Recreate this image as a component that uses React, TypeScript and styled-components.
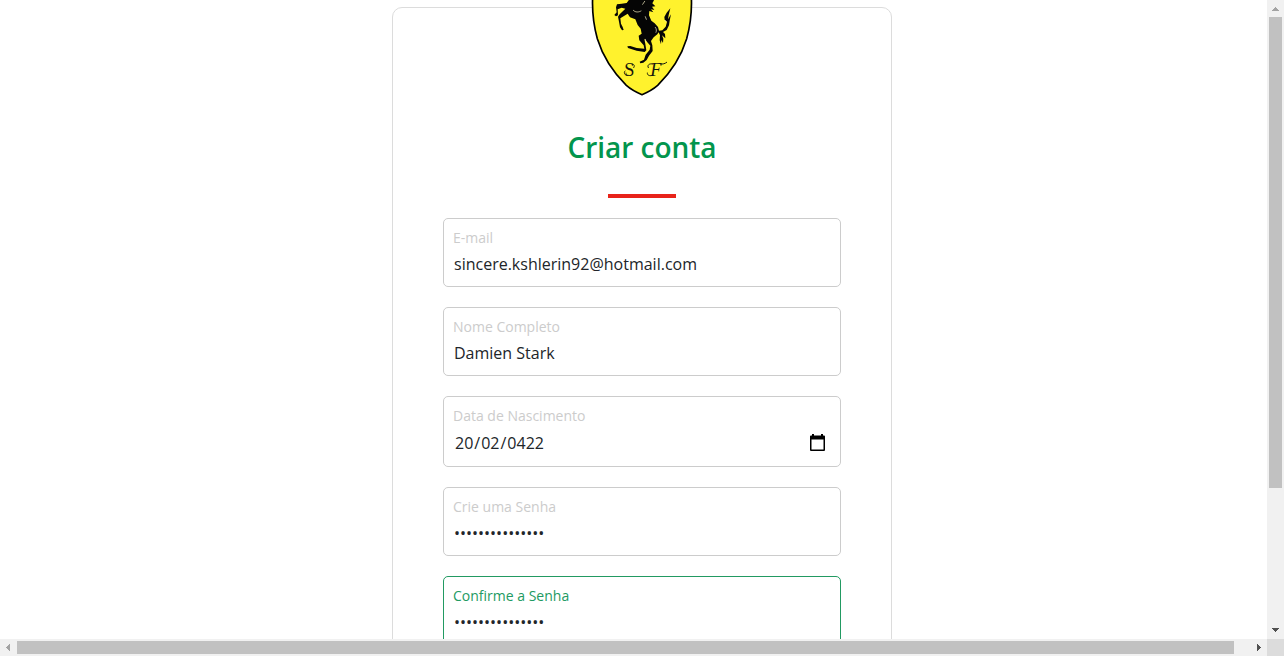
import React from "react";
import styled, { createGlobalStyle } from "styled-components";

const GlobalStyle = createGlobalStyle`
  * { box-sizing: border-box; }
  html, body { margin: 0; padding: 0; background: #fff; overflow: hidden; }
  body { font-family: "Open Sans", "Liberation Sans", sans-serif; }
`;

const Window = styled.div`
  display: grid;
  grid-template-columns: minmax(0, 1fr) 17px;
  grid-template-rows: minmax(0, 1fr) 17px;
  width: 100vw;
  height: 100vh;
  overflow: hidden;
`;

const Viewport = styled.main`
  overflow: hidden;
  min-width: 0;
  min-height: 0;
`;

const Page = styled.div`
  display: flex;
  justify-content: center;
  width: 1284px;
  padding-top: 7px;
`;

const Card = styled.section`
  display: flex;
  flex-direction: column;
  align-items: center;
  width: 500px;
  height: 800px;
  padding: 0 50px;
  border: 1px solid #dcdcdc;
  border-radius: 10px;
`;

const Crest = styled.svg`
  display: block;
  flex: none;
  width: 120px;
  height: 100px;
  margin-top: -8px;
`;

const Title = styled.h1`
  margin: 28px 0 0;
  font-size: 28px;
  line-height: 38px;
  font-weight: 600;
  letter-spacing: -0.05px;
  color: #03954d;
`;

const Rule = styled.div`
  flex: none;
  width: 68px;
  height: 4px;
  margin: 28px 0 20px;
  background: #e8231a;
`;

const Form = styled.form`
  display: flex;
  flex-direction: column;
  gap: 20px;
  width: 100%;
`;

const Field = styled.div<{ $active?: boolean; $date?: boolean }>`
  flex: none;
  height: ${(p) => (p.$date ? 71 : 69)}px;
  padding: 9px 9px 0;
  border: 1px solid ${(p) => (p.$active ? "#229a62" : "#ccc")};
  border-radius: 5px;
  color: ${(p) => (p.$active ? "#229a62" : "#ccc")};
`;

const Label = styled.div`
  font-size: 14px;
  line-height: 20px;
`;

const Value = styled.div<{ $date?: boolean }>`
  display: flex;
  align-items: center;
  justify-content: space-between;
  height: 22px;
  margin-top: ${(p) => (p.$date ? 6 : 5)}px;
  padding: 0 6px 0 ${(p) => (p.$date ? 2 : 1)}px;
  font-size: 16px;
  line-height: 22px;
  color: #212529;
`;

const Slash = styled.span`
  padding: 0 1px;
`;

const Track = styled.div<{ $vertical?: boolean }>`
  display: flex;
  flex-direction: ${(p) => (p.$vertical ? "column" : "row")};
  align-items: center;
  background: #f1f1f1;
  min-width: 0;
  min-height: 0;
`;

const Thumb = styled.div<{ $vertical?: boolean }>`
  flex: none;
  width: ${(p) => (p.$vertical ? "13px" : "1217px")};
  height: ${(p) => (p.$vertical ? "471px" : "13px")};
  margin: ${(p) => (p.$vertical ? "0 0 auto" : "0 auto 0 0")};
  background: #c1c1c1;
`;

const Arrow = styled.svg`
  display: block;
  flex: none;
  width: 17px;
  height: 17px;
`;

const Corner = styled.div`
  background: #dcdcdc;
`;

const Calendar = styled.svg`
  display: block;
  width: 15px;
  height: 17px;
  margin-bottom: 1px;
`;

const CalendarIcon = () => (
  <Calendar viewBox="0 0 15 17">
    <path
      d="M2 0h2v1.5h7V0h2v1.5h1a1 1 0 0 1 1 1V16a1 1 0 0 1-1 1H1a1 1 0 0 1-1-1V2.500a1 1 0 0 1 1-1h1zM1.500 5.500v10h12v-10z"
      fill="#000"
      fillRule="evenodd"
    />
  </Calendar>
);

const HorseCrest = () => (
  <Crest viewBox="0 0 360 300" aria-label="S F">
    <path
      d="M32-10C30 32 35 77 46 116C62 168 92 215 133 256C150 271 166 278 180 284C194 278 210 271 227 256C268 215 298 168 314 116C325 77 330 32 328-10Z"
      fill="#fff22d"
      stroke="#000"
      strokeWidth="5"
    />
    <path
      d="M145-6L134 9L119 11L105 13L102 22L104 37L97 45L102 49L108 46L107 28L119 23L130 26L113 43L108 50L111 65L114 82L120 91L125 90L122 81L117 71L115 55L137 41L144 52L160 58L167 75L176 86L179 101L170 107L172 121L185 136L187 146L164 144L145 138L136 139L138 144L164 152L188 156L193 151L190 132L187 116L198 129L205 137L203 149L191 164L186 179L173 185L175 190L184 188L194 180L201 167L212 153L211 136L207 123L215 112L226 103L230 97L234 106L233 121L237 133L238 120L243 129L244 116L240 106L250 115L249 102L243 96L254 90L261 76L263 62L267 43L258 58L260 45L265 25L254 38L247 51L248 59L255 66L251 80L241 91L231 92L228 81L218 70L208 62L201 46L202 33L214 37L207 28L217 30L210 20L220 19L211 10L216 1L208-6Z"
      fill="#050505"
    />
    <path
      d="M154 31C160 38 170 37 177 33M190 50L193 58M220 82C224 87 224 93 222 97M190 118L192 126M249 61L253 65M188 4L182 13"
      fill="none"
      stroke="#fff8c8"
      strokeWidth="2"
      strokeLinecap="round"
    />
    <g fill="#17170c" fontFamily="Liberation Serif, serif" fontSize="55">
      <text x="127" y="227">S</text>
      <text x="205" y="227" fontStyle="italic">F</text>
    </g>
    <path
      d="M129 213C123 219 130 228 138 226M151 193C157 192 159 198 155 203M213 192C202 189 194 196 199 203M235 192C243 193 249 191 254 187M211 226C203 229 195 226 196 219"
      fill="none"
      stroke="#17170c"
      strokeWidth="3"
      strokeLinecap="round"
    />
  </Crest>
);

const DateText = ({ value }: { value: string }) => (
  <span>
    {value.split("/").map((part, i) => (
      <React.Fragment key={i}>
        {i > 0 && <Slash>/</Slash>}
        {part}
      </React.Fragment>
    ))}
  </span>
);

const fields = [
  { label: "E-mail", value: "sincere.kshlerin92@hotmail.com" },
  { label: "Nome Completo", value: "Damien Stark" },
  { label: "Data de Nascimento", value: "20/02/0422", date: true },
  { label: "Crie uma Senha", value: "•".repeat(15) },
  { label: "Confirme a Senha", value: "•".repeat(15), active: true },
];

export default function App() {
  return (
    <>
      <GlobalStyle />
      <Window>
        <Viewport>
          <Page>
            <Card>
              <HorseCrest />
              <Title>Criar conta</Title>
              <Rule />
              <Form>
                {fields.map((f) => (
                  <Field key={f.label} $active={f.active} $date={f.date}>
                    <Label>{f.label}</Label>
                    <Value $date={f.date}>
                      {f.date ? <DateText value={f.value} /> : f.value}
                      {f.date && <CalendarIcon />}
                    </Value>
                  </Field>
                ))}
              </Form>
            </Card>
          </Page>
        </Viewport>
        <Track $vertical>
          <Arrow viewBox="0 0 17 17" shapeRendering="crispEdges">
            <path d="M8 7h1v1h1v1h1v1h1v1H5v-1h1V9h1V8h1z" fill="#a3a3a3" />
          </Arrow>
          <Thumb $vertical />
          <Arrow viewBox="0 0 17 17" shapeRendering="crispEdges">
            <path d="M5 6h7v1h-1v1h-1v1H9v1H8V9H7V8H6V7H5z" fill="#505050" />
          </Arrow>
        </Track>
        <Track>
          <Arrow viewBox="0 0 17 17" shapeRendering="crispEdges">
            <path d="M10 5v7H9v-1H8v-1H7V9H6V8h1V7h1V6h1V5z" fill="#a3a3a3" />
          </Arrow>
          <Thumb />
          <Arrow viewBox="0 0 17 17" shapeRendering="crispEdges">
            <path d="M7 5h1v1h1v1h1v1h1v1h-1v1H9v1H8v1H7z" fill="#505050" />
          </Arrow>
        </Track>
        <Corner />
      </Window>
    </>
  );
}
